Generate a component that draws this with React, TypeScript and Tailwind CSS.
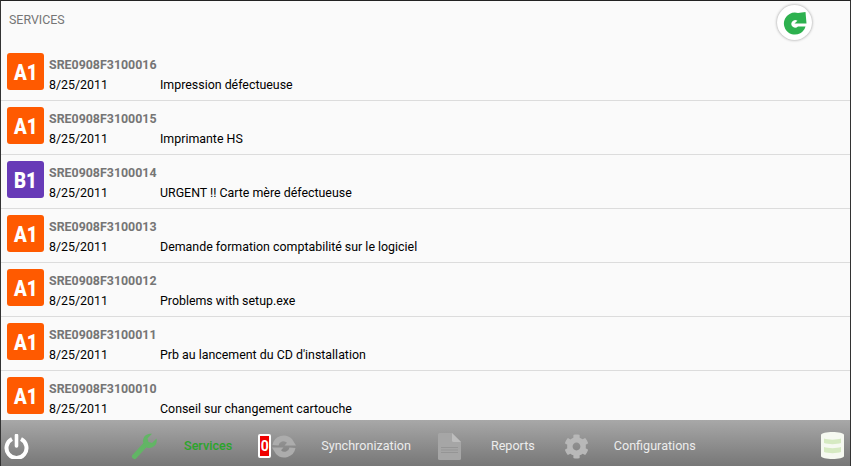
import { FaCog } from "react-icons/fa"

const services = [
  { grade: "A1", code: "SRE0908F3100016", label: "Impression défectueuse" },
  { grade: "A1", code: "SRE0908F3100015", label: "Imprimante HS" },
  { grade: "B1", code: "SRE0908F3100014", label: "URGENT !! Carte mère défectueuse" },
  { grade: "A1", code: "SRE0908F3100013", label: "Demande formation comptabilité sur le logiciel" },
  { grade: "A1", code: "SRE0908F3100012", label: "Problems with setup.exe" },
  { grade: "A1", code: "SRE0908F3100011", label: "Prb au lancement du CD d'installation" },
  { grade: "A1", code: "SRE0908F3100010", label: "Conseil sur changement cartouche" },
]

function RefreshIcon() {
  return (
    <svg viewBox="0 0 24 24" className="h-[24px] w-[24px]">
      <path
        d="M22.5 15.5 A11 11 0 1 1 15 2 L22.5 1 L23.5 12.5 L11.5 12.5 L14.5 9.8 A3.8 3.8 0 1 0 15 15.5 Z"
        fill="#2db14f"
      />
    </svg>
  )
}

function PowerIcon() {
  return (
    <svg viewBox="0 0 25 25" className="ml-[3px] h-[25px] w-[25px]" fill="none" stroke="#ffffff">
      <path d="M8 5 A10 10 0 1 0 17 5" strokeWidth={4} />
      <path d="M12.5 1.5 V12" strokeWidth={3.6} strokeLinecap="round" />
    </svg>
  )
}

function WrenchIcon() {
  return (
    <svg viewBox="0 0 26 27" className="ml-[102px] h-[27px] w-[26px]" fill="#62b565">
      <path d="M3.5 23.5 L14.5 11.5" stroke="#62b565" strokeWidth={5} strokeLinecap="round" />
      <path d="M12 9 A7.5 7.5 0 0 1 21 0.8 L16.5 5.5 L17.5 9 L21 10 L25.5 5.5 A7.5 7.5 0 0 1 15.5 14.5 Z" />
    </svg>
  )
}

function SyncIcon() {
  return (
    <svg viewBox="0 0 24 25" className="ml-[1px] h-[25px] w-[24px]" fill="#acacac">
      <path d="M0.5 11 A11.5 11.5 0 0 1 20 5 L24 11.5 H12.5 L15 8.8 A5 5 0 0 0 6.5 11.5 Z" />
      <path d="M23.5 14 A11.5 11.5 0 0 1 4 20 L0 13.5 H11.5 L9 16.2 A5 5 0 0 0 17.5 13.5 Z" />
    </svg>
  )
}

function ReportIcon() {
  return (
    <svg viewBox="0 0 23 27" className="ml-[27px] h-[27px] w-[23px]">
      <path d="M0 1.5 Q0 0 1.5 0 H14 L23 9 V25.5 Q23 27 21.5 27 H1.5 Q0 27 0 25.5 Z" fill="#a6a6a6" />
      <path d="M14 0 L23 9 H15.5 Q14 9 14 7.5 Z" fill="#bdbdbd" />
      <path d="M3 14 H20 V15 H3 Z M3 16.5 H20 V17.5 H3 Z M3 19 H20 V20 H3 Z" fill="#959595" />
    </svg>
  )
}

function DatabaseIcon() {
  return (
    <svg viewBox="0 0 23 27" className="ml-auto mb-[2px] mr-[6px] h-[27px] w-[23px]">
      <path d="M0 3 C0 -1 23 -1 23 3 V24 C23 28 0 28 0 24 Z" fill="#f6f9f1" />
      <path d="M3 6.5 C7 8 16 8 20 6.5 V11 C16 12.5 7 12.5 3 11 Z" fill="#d6eac2" />
      <path d="M3 15 C7 16.5 16 16.5 20 15 V20 C16 21.5 7 21.5 3 20 Z" fill="#d6eac2" />
    </svg>
  )
}

export default function App() {
  return (
    <main className="flex h-[466px] w-[851px] flex-col overflow-hidden border-x border-t border-x-[#333333] border-t-[#222222] bg-[#fafafa] font-['Roboto',sans-serif] text-[12.4px]">
      <header className="relative h-[46px] shrink-0 pl-2 pt-[10px] text-[#757575]">
        SERVICES
        <button className="absolute left-[776px] top-[4px] flex h-[35px] w-[35px] items-center justify-center rounded-full bg-white shadow-[0_0_3px_rgba(0,0,0,0.4)]">
          <RefreshIcon />
        </button>
      </header>

      <ul className="min-h-0 flex-1 overflow-hidden">
        {services.map((s) => (
          <li key={s.code} className="flex h-[54px] border-b border-[#dcdcdc] pl-[6px] pt-[6px]">
            <div
              className={
                s.grade === "A1"
                  ? "flex h-[37px] w-[37px] shrink-0 items-center justify-center rounded-[3px] bg-[#ff5a00] pt-[2px] text-[22px] font-black text-white"
                  : "flex h-[37px] w-[37px] shrink-0 items-center justify-center rounded-[3px] bg-[#673ab7] pt-[2px] text-[22px] font-black text-white"
              }
            >
              <span className="inline-block scale-x-[0.85]">{s.grade}</span>
            </div>
            <div className="ml-[5px] flex flex-col">
              <span className="mt-[1px] h-[20px] font-bold leading-[21px] text-[#757575]">{s.code}</span>
              <div className="flex text-black leading-[21px]">
                <span className="w-[111px]">8/25/2011</span>
                <span>{s.label}</span>
              </div>
            </div>
          </li>
        ))}
      </ul>

      <nav className="flex h-[46px] shrink-0 items-center bg-gradient-to-b from-[#a8a8a8] to-[#777777] pt-[6px] text-[12.6px] text-[#ececec]">
        <PowerIcon />
        <WrenchIcon />
        <span className="ml-[27px] font-medium text-[#2aa52a]">Services</span>
        <span className="ml-[26px] flex h-[24px] w-[13px] items-center justify-center rounded-[2px] border-2 border-white bg-[#f00000] text-sm font-bold leading-none text-white">
          0
        </span>
        <SyncIcon />
        <span className="ml-[25px]">Synchronization</span>
        <ReportIcon />
        <span className="ml-[30px]">Reports</span>
        <FaCog className="ml-[29px] h-[25px] w-[25px] text-[#b8b8b8]" />
        <span className="ml-[25px]">Configurations</span>
        <DatabaseIcon />
      </nav>
    </main>
  )
}
